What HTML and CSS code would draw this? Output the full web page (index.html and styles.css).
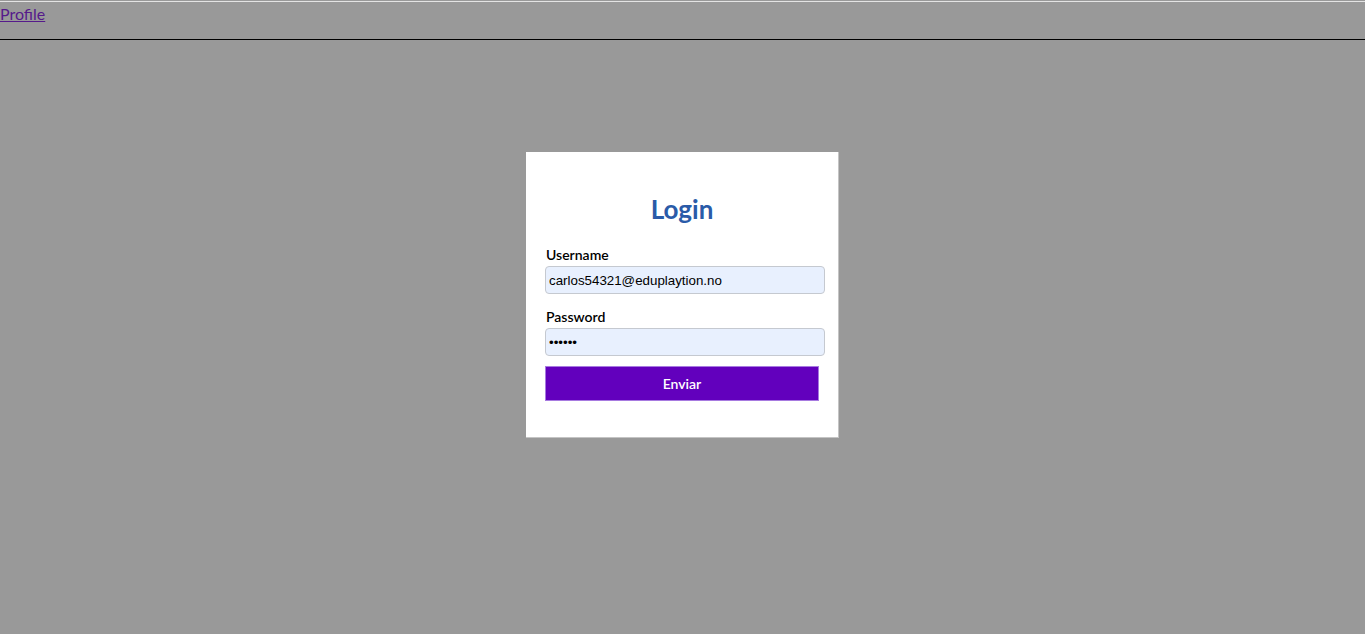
FILE: index.html
```html
<!DOCTYPE html>
<html lang="en">
<head>
<meta charset="utf-8">
<title>Login</title>
<link rel="stylesheet" href="styles.css">
</head>
<body>
<nav class="topnav">
  <a class="nav-link" href="#profile">Profile</a>
</nav>
<main class="page">
  <form class="card">
    <h2 class="card-title">Login</h2>
    <label class="field-label" for="username">Username</label>
    <input class="field-input" id="username" type="text" value="carlos54321@eduplaytion.no">
    <label class="field-label" for="password">Password</label>
    <input class="field-input field-last" id="password" type="password" value="secret">
    <button class="submit-btn" type="button">Enviar</button>
  </form>
</main>
</body>
</html>
```
FILE: styles.css
```css
html, body {
  margin: 0;
  padding: 0;
  background: #999999;
  height: 100%;
}
body {
  font-family: "Lato", "Open Sans", sans-serif;
}
.topnav {
  margin-top: 1px;
  border-top: 1px solid #e4e4e4;
  border-bottom: 1px solid #000;
  box-sizing: border-box;
  height: 39px;
}
.nav-link {
  display: inline-block;
  font-size: 16px;
  line-height: 20px;
  margin-top: 2px;
  color: #551a8b;
  text-decoration: underline;
}
.page {
  display: flex;
  justify-content: center;
  padding-top: 112px;
}
.card {
  box-sizing: border-box;
  width: 313px;
  height: 286px;
  background: #fff;
  border-right: 1px solid #c4c4c4;
  border-bottom: 1px solid #c4c4c4;
  padding: 41px 0 0 19px;
  display: flex;
  flex-direction: column;
  align-items: flex-start;
}
.card-title {
  align-self: stretch;
  margin: 0 0 21px -19px;
  text-align: center;
  font-size: 26px;
  line-height: 32px;
  font-weight: 700;
  color: #2a5ba8;
}
.field-label {
  font-size: 14px;
  line-height: 18px;
  font-weight: 600;
  color: #000;
  margin: 0 0 2px 1px;
}
.field-input {
  box-sizing: border-box;
  width: 280px;
  height: 28px;
  margin: 0 0 14px 0;
  padding: 0 3px;
  border: 1px solid #c5c9d0;
  border-radius: 4px;
  background: #e8f0fe;
  font-family: "Liberation Sans", Arial, sans-serif;
  font-size: 13.333px;
  color: #000;
  outline: none;
}
.field-last {
  margin-bottom: 10px;
}
.submit-btn {
  box-sizing: border-box;
  width: 274px;
  height: 35px;
  background: #6200bd;
  border: 1px solid #a77ae0;
  color: #fff;
  font-family: "Lato", "Open Sans", sans-serif;
  font-size: 14px;
  font-weight: 600;
  cursor: pointer;
}
```
